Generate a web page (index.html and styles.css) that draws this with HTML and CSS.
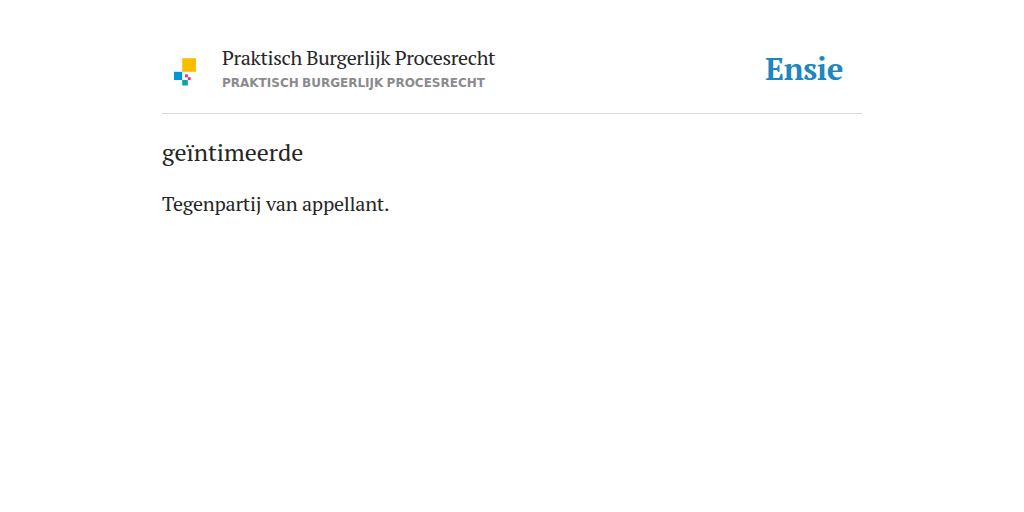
FILE: index.html
```html
<!DOCTYPE html>
<html lang="nl">
<head>
    <meta charset="UTF-8">
    <meta name="viewport" content="width=device-width, initial-scale=1.0">
    <title>geïntimeerde - Praktisch Burgerlijk Procesrecht</title>
    <link rel="stylesheet" href="styles.css">
</head>
<body>

    <div class="container">
        <header class="header">
            <svg class="book-logo" width="46" height="46" viewBox="0 0 46 46">
                <rect x="20.2" y="12.2" width="13.8" height="13.6" fill="#fabe00"/>
                <rect x="12" y="25.8" width="8.2" height="8.2" fill="#0096d6"/>
                <rect x="23" y="28.4" width="2.9" height="2.9" fill="#e6318c"/>
                <rect x="25.8" y="31.2" width="2.9" height="2.9" fill="#e6318c"/>
                <rect x="20.2" y="34" width="5.6" height="5.5" fill="#08a6a0"/>
            </svg>
            <div class="book-info">
                <p class="book-title">Praktisch Burgerlijk Procesrecht</p>
                <p class="book-subtitle">Praktisch Burgerlijk Procesrecht</p>
            </div>
            <a class="brand">Ensie</a>
        </header>

        <main class="article">
            <h1>geïntimeerde</h1>
            <p>Tegenpartij van appellant.</p>
        </main>
    </div>

</body>
</html>
```
FILE: styles.css
```css
* {
    margin: 0;
    padding: 0;
    box-sizing: border-box;
}

body {
    background: #fff;
    color: #262626;
    font-family: "PT Serif", "Liberation Serif", serif;
}

.container {
    width: 700px;
    margin: 0 auto;
    padding-top: 46px;
}

.header {
    display: flex;
    height: 68px;
    border-bottom: 1px solid #d9d9de;
}

.book-logo {
    flex: none;
    margin-right: 14px;
}

.book-title {
    font-size: 20px;
    letter-spacing: -0.38px;
    line-height: 24px;
}

.book-subtitle {
    margin-top: 5px;
    color: #8b8b8d;
    font-family: "DejaVu Sans", sans-serif;
    font-size: 12px;
    font-weight: bold;
    line-height: 16px;
    word-spacing: -0.9px;
    text-transform: uppercase;
}

.brand {
    margin-left: auto;
    margin-right: 19px;
    color: #1e87c0;
    font-size: 31px;
    font-weight: bold;
    letter-spacing: -0.4px;
    line-height: 46px;
}

.article h1 {
    margin-top: 22px;
    font-size: 24px;
    font-weight: normal;
    letter-spacing: -0.05px;
    line-height: 32px;
}

.article p {
    margin-top: 24px;
    font-size: 20px;
    letter-spacing: -0.24px;
    line-height: 24px;
}
```
